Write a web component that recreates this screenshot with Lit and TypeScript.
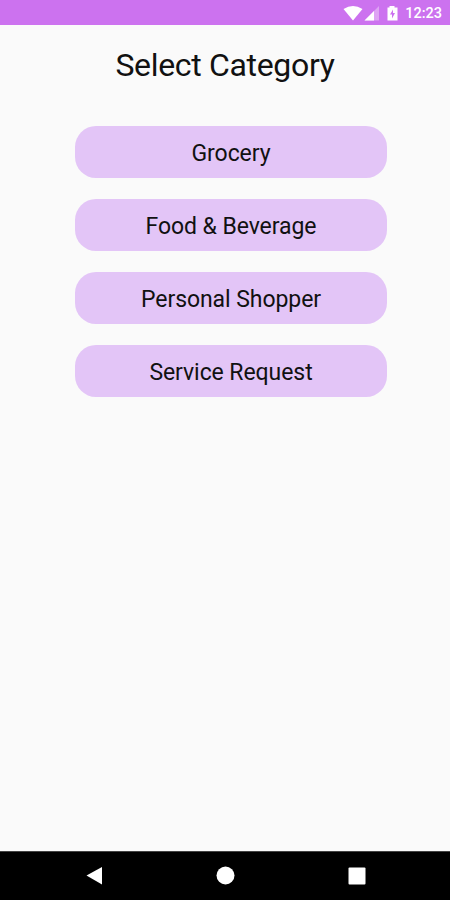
import { LitElement, html, css } from "lit";
import { customElement } from "lit/decorators.js";

const CATEGORIES = ["Grocery", "Food & Beverage", "Personal Shopper", "Service Request"];

@customElement("app-root")
export class AppRoot extends LitElement {
  static styles = css`
    :host {
      display: flex;
      flex-direction: column;
      height: 100vh;
      background: #fafafa;
      color: #111;
      font-family: Roboto, "Liberation Sans", sans-serif;
      overflow: hidden;
    }
    .status {
      display: flex;
      align-items: center;
      justify-content: flex-end;
      height: 25px;
      padding-right: 8px;
      background: #cc72ef;
      color: #fff;
      font-size: 14.5px;
      font-weight: 500;
      box-sizing: border-box;
    }
    .status svg { display: block; }
    .status span { margin-left: 5px; padding-top: 2px; line-height: 25px; }
    main {
      flex: 1;
      display: flex;
      flex-direction: column;
    }
    h1 {
      margin: 20px 0 0;
      height: 40px;
      line-height: 40px;
      font-size: 32px;
      letter-spacing: -0.33px;
      font-weight: 400;
      text-align: center;
    }
    .list {
      display: flex;
      flex-direction: column;
      gap: 21px;
      margin: 41px 63px 0 75px;
    }
    button {
      height: 52px;
      border: 0;
      border-radius: 21px;
      padding: 2px 0 0;
      background: #e3c5f7;
      color: #111;
      font: 400 23px Roboto, "Liberation Sans", sans-serif;
      letter-spacing: -0.07px;
    }
    nav {
      display: flex;
      justify-content: center;
      height: 49px;
      box-sizing: border-box;
      border-top: 1px solid #444;
      background: #000;
    }
    nav svg { display: block; }
  `;

  render() {
    return html`
      <div class="status">
        <svg width="60" height="25" viewBox="340 0 60 25" fill="#fff">
          <path d="M343.500 9Q353 3 362.500 9L353 20.500Z" />
          <path d="M379 6V20.500H364.500Z" opacity=".35" />
          <path d="M374 11V20.500H364.500Z" />
          <path fill-rule="evenodd" d="M389.500 6h5v1.500h3v13h-10V7.500h2ZM393 9.500l-3 5h2v4l3-5.500h-2Z" />
        </svg>
        <span>12:23</span>
      </div>
      <main>
        <h1>Select Category</h1>
        <div class="list">${CATEGORIES.map((c) => html`<button>${c}</button>`)}</div>
      </main>
      <nav>
        <svg width="450" height="48" viewBox="0 852 450 48" fill="#fff">
          <path d="M86.500 875.500L102 867V884.500Z" />
          <circle cx="225.500" cy="875.500" r="9" />
          <rect x="348.500" y="867.500" width="17" height="17" rx="1" />
        </svg>
      </nav>
    `;
  }
}
